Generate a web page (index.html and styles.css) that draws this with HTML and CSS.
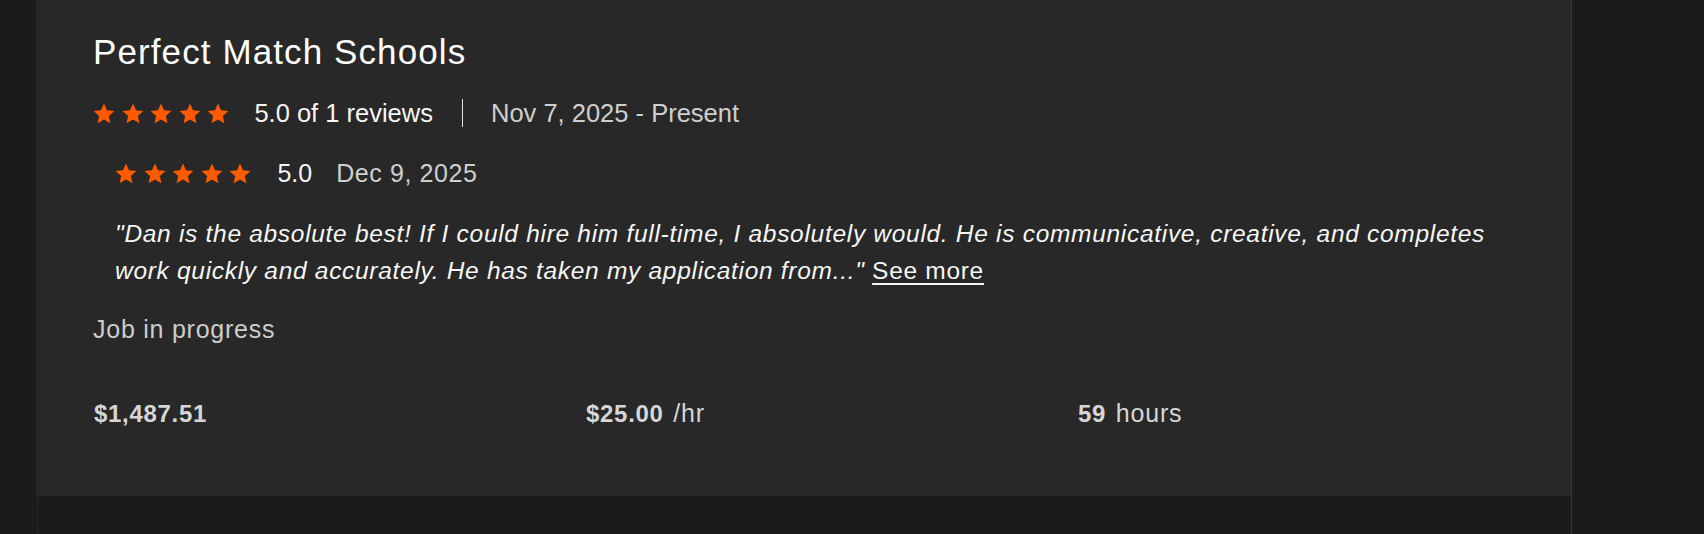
FILE: index.html
```html
<!DOCTYPE html>
<html lang="en">
<head>
<meta charset="utf-8">
<title>Perfect Match Schools</title>
<link rel="stylesheet" href="styles.css">
</head>
<body>
<div class="page">
  <div class="gutter"></div>
  <main class="column">
    <section class="panel">
      <h2 class="title">Perfect Match Schools</h2>
      <div class="summary">
        <div class="stars">
          <svg viewBox="0 0 24 23"><polygon points="12,0.6 15.29,8.07 23.41,8.89 17.33,14.33 19.05,22.31 12,18.2 4.95,22.31 6.67,14.33 0.59,8.89 8.71,8.07"/></svg>
          <svg viewBox="0 0 24 23"><polygon points="12,0.6 15.29,8.07 23.41,8.89 17.33,14.33 19.05,22.31 12,18.2 4.95,22.31 6.67,14.33 0.59,8.89 8.71,8.07"/></svg>
          <svg viewBox="0 0 24 23"><polygon points="12,0.6 15.29,8.07 23.41,8.89 17.33,14.33 19.05,22.31 12,18.2 4.95,22.31 6.67,14.33 0.59,8.89 8.71,8.07"/></svg>
          <svg viewBox="0 0 24 23"><polygon points="12,0.6 15.29,8.07 23.41,8.89 17.33,14.33 19.05,22.31 12,18.2 4.95,22.31 6.67,14.33 0.59,8.89 8.71,8.07"/></svg>
          <svg viewBox="0 0 24 23"><polygon points="12,0.6 15.29,8.07 23.41,8.89 17.33,14.33 19.05,22.31 12,18.2 4.95,22.31 6.67,14.33 0.59,8.89 8.71,8.07"/></svg>
        </div>
        <span class="score">5.0 of 1 reviews</span>
        <span class="divider"></span>
        <span class="period">Nov 7, 2025 - Present</span>
      </div>
      <div class="review">
        <div class="review-head">
          <div class="stars">
            <svg viewBox="0 0 24 23"><polygon points="12,0.6 15.29,8.07 23.41,8.89 17.33,14.33 19.05,22.31 12,18.2 4.95,22.31 6.67,14.33 0.59,8.89 8.71,8.07"/></svg>
            <svg viewBox="0 0 24 23"><polygon points="12,0.6 15.29,8.07 23.41,8.89 17.33,14.33 19.05,22.31 12,18.2 4.95,22.31 6.67,14.33 0.59,8.89 8.71,8.07"/></svg>
            <svg viewBox="0 0 24 23"><polygon points="12,0.6 15.29,8.07 23.41,8.89 17.33,14.33 19.05,22.31 12,18.2 4.95,22.31 6.67,14.33 0.59,8.89 8.71,8.07"/></svg>
            <svg viewBox="0 0 24 23"><polygon points="12,0.6 15.29,8.07 23.41,8.89 17.33,14.33 19.05,22.31 12,18.2 4.95,22.31 6.67,14.33 0.59,8.89 8.71,8.07"/></svg>
            <svg viewBox="0 0 24 23"><polygon points="12,0.6 15.29,8.07 23.41,8.89 17.33,14.33 19.05,22.31 12,18.2 4.95,22.31 6.67,14.33 0.59,8.89 8.71,8.07"/></svg>
          </div>
          <span class="review-score">5.0</span>
          <span class="review-date">Dec 9, 2025</span>
        </div>
        <p class="quote">"Dan is the absolute best! If I could hire him full-time, I absolutely would. He is communicative, creative, and completes work quickly and accurately. He has taken my application from..." <a class="more" href="#">See more</a></p>
      </div>
      <p class="status">Job in progress</p>
      <div class="stats">
        <div class="stat"><b>$1,487.51</b></div>
        <div class="stat"><b>$25.00</b> /hr</div>
        <div class="stat"><b>59</b> hours</div>
      </div>
    </section>
    <div class="below"></div>
  </main>
  <div class="aside"></div>
</div>
</body>
</html>
```

FILE: styles.css
```css
html, body {
  margin: 0;
  padding: 0;
  background: #1b1b1b;
  height: 100%;
}
body {
  font-family: "Liberation Sans", Arial, sans-serif;
  color: #f4f4f4;
}
.page {
  display: flex;
  height: 534px;
  overflow: hidden;
}
.gutter {
  width: 36px;
  flex: none;
}
.column {
  width: 1535px;
  flex: none;
  display: flex;
  flex-direction: column;
  border-right: 1px solid #363636;
}
.aside {
  flex: 1;
}
.panel {
  background: #282828;
  padding: 31px 58px 68px 57px;
  height: 397px;
}
.below {
  flex: 1;
  border-left: 1px dotted #2c2c2c;
  margin-left: 1px;
}
.title {
  margin: 0;
  font-size: 35px;
  line-height: 42px;
  font-weight: 400;
  letter-spacing: 1.1px;
  color: #ffffff;
}
.summary {
  display: flex;
  align-items: center;
  height: 30px;
  margin-top: 25px;
}
.stars {
  display: flex;
  align-items: center;
  gap: 6.6px;
}
.stars svg {
  width: 22px;
  height: 21px;
  display: block;
  fill: #ff5a00;
}
.score {
  margin-left: 25px;
  font-size: 25.5px;
  line-height: 30px;
  color: #f6f6f6;
}
.divider {
  width: 1px;
  height: 28px;
  background: #e0e0e0;
  margin: 0 28px 0 29px;
}
.period {
  font-size: 25.5px;
  line-height: 30px;
  color: #cfcfcf;
}
.review {
  padding-left: 22px;
  margin-top: 30px;
}
.review-head {
  display: flex;
  align-items: center;
  height: 30px;
}
.review-score {
  margin-left: 26px;
  font-size: 25px;
  line-height: 30px;
  color: #f6f6f6;
}
.review-date {
  margin-left: 24px;
  font-size: 25px;
  line-height: 30px;
  letter-spacing: 0.6px;
  color: #cfcfcf;
}
.quote {
  margin: 27px 0 0;
  font-size: 24.5px;
  line-height: 37px;
  font-style: italic;
  letter-spacing: 0.7px;
  color: #f6f6f6;
}
.more {
  font-style: normal;
  color: #f6f6f6;
  text-decoration: underline;
  text-underline-offset: 4px;
  text-decoration-thickness: 2px;
}
.status {
  margin: 25px 0 0;
  font-size: 25px;
  line-height: 30px;
  color: #cdcdcd;
  letter-spacing: 0.75px;
}
.stats {
  display: grid;
  grid-template-columns: 492px 492px 1fr;
  margin-top: 54px;
  padding-left: 1px;
}
.stat {
  font-size: 25px;
  line-height: 30px;
  letter-spacing: 0.8px;
  word-spacing: 2px;
  color: #d6d6d6;
}
.stat b {
  font-size: 24px;
  font-weight: 700;
  letter-spacing: 0.7px;
}
```
